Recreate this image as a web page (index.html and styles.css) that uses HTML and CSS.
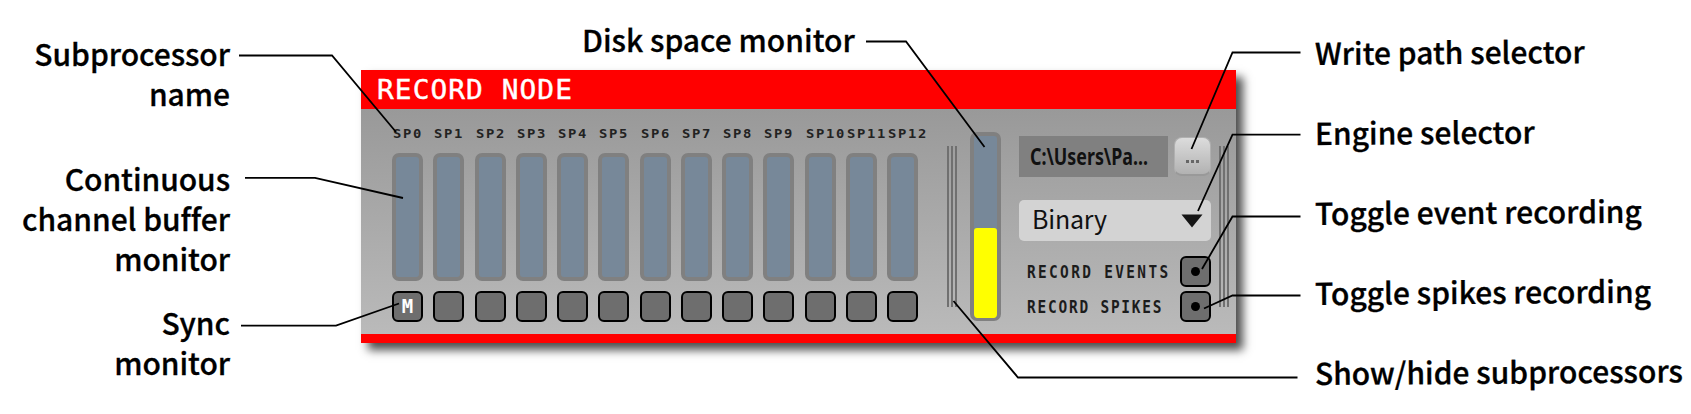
FILE: index.html
```
<!DOCTYPE html>
<html lang="en">
<head>
<meta charset="utf-8">
<title>Record Node</title>
<link rel="stylesheet" href="styles.css">
</head>
<body>
<main class="figure">
  <div class="notes notes-left">
    <p class="note note-name">Subprocessor<br>name</p>
    <p class="note note-buffer">Continuous<br>channel buffer<br>monitor</p>
    <p class="note note-sync">Sync<br>monitor</p>
  </div>
  <div class="center">
    <p class="note note-disk">Disk space monitor</p>
    <section class="node">
      <header class="node-title"><span>RECORD NODE</span></header>
      <div class="node-body">
        <div class="channels">
          <div class="channel"><span class="sp">SP0</span><div class="meter"></div><div class="key"><span class="key-label">M</span></div></div>
          <div class="channel"><span class="sp">SP1</span><div class="meter"></div><div class="key"></div></div>
          <div class="channel"><span class="sp">SP2</span><div class="meter"></div><div class="key"></div></div>
          <div class="channel"><span class="sp">SP3</span><div class="meter"></div><div class="key"></div></div>
          <div class="channel"><span class="sp">SP4</span><div class="meter"></div><div class="key"></div></div>
          <div class="channel"><span class="sp">SP5</span><div class="meter"></div><div class="key"></div></div>
          <div class="channel"><span class="sp">SP6</span><div class="meter"></div><div class="key"></div></div>
          <div class="channel"><span class="sp">SP7</span><div class="meter"></div><div class="key"></div></div>
          <div class="channel"><span class="sp">SP8</span><div class="meter"></div><div class="key"></div></div>
          <div class="channel"><span class="sp">SP9</span><div class="meter"></div><div class="key"></div></div>
          <div class="channel"><span class="sp">SP10</span><div class="meter"></div><div class="key"></div></div>
          <div class="channel"><span class="sp">SP11</span><div class="meter"></div><div class="key"></div></div>
          <div class="channel"><span class="sp">SP12</span><div class="meter"></div><div class="key"></div></div>
        </div>
        <div class="grip"><i></i><i></i><i></i></div>
        <div class="disk"><div class="disk-fill"></div></div>
        <div class="controls">
          <div class="path-row">
            <div class="path"><span>C:\Users\Pa...</span></div>
            <div class="browse"><i></i><i></i><i></i></div>
          </div>
          <div class="select"><span>Binary</span>
            <svg width="22" height="14" viewBox="0 0 22 14"><path d="M.5 .5H21.500L11 13.500Z" fill="#151515"/></svg>
          </div>
          <div class="toggle-row"><span>RECORD EVENTS</span><div class="key"><b class="dot"></b></div></div>
          <div class="toggle-row spikes"><span>RECORD SPIKES</span><div class="key"><b class="dot"></b></div></div>
        </div>
        <div class="grip grip-right"><i></i><i></i><i></i></div>
      </div>
    </section>
  </div>
  <div class="notes notes-right">
    <p class="note">Write path selector</p>
    <p class="note">Engine selector</p>
    <p class="note">Toggle event recording</p>
    <p class="note">Toggle spikes recording</p>
    <p class="note">Show/hide subprocessors</p>
  </div>
  <svg class="leaders" width="1691" height="414" viewBox="0 0 1691 414">
    <path d="M239 55.500H332L396 132"/>
    <path d="M245 177.800H315L403 198"/>
    <path d="M241 325.700H336L399 303.500"/>
    <path d="M866 41.500H906L984.500 147"/>
    <path d="M1300.500 52.500H1232.500L1191.500 149"/>
    <path d="M1300.500 134.700H1232.500L1198 211"/>
    <path d="M1300.500 216.500H1232.500L1202 269"/>
    <path d="M1300.500 295.500H1232.500L1204 308.500"/>
    <path d="M1297.500 377.500H1018L953.500 301"/>
  </svg>
</main>
</body>
</html>
```
FILE: styles.css
```
* { box-sizing: border-box; }
body { margin: 0; background: #fff; overflow: hidden; }
.figure {
  position: relative;
  display: grid;
  grid-template-columns: 230px 1085px 376px;
  width: 1691px;
  height: 414px;
}
.note {
  margin: 0;
  font: 500 30px/40px "Noto Sans CJK SC", "Noto Sans", sans-serif;
  color: #000;
  -webkit-text-stroke: .3px #000;
  white-space: nowrap;
}
.notes-left { text-align: right; padding-top: 33px; letter-spacing: -.05px; }
.note-buffer { margin-top: 45px; }
.note-sync { margin-top: 24px; }
.notes-right { display: grid; grid-auto-rows: 80.2px; padding-top: 31.5px; }
.notes-right .note { transform: rotate(-.4deg); transform-origin: left center; justify-self: start; }
.center { padding-left: 131px; }
.note-disk { padding: 19px 0 0 221px; height: 70px; }
.node { width: 875px; height: 273px; box-shadow: 7px 7px 9px rgba(0,0,0,.7); background: #f00; }
.node-title {
  height: 39px;
  padding: 0 0 0 16px;
  font: 26px/41px "DejaVu Sans Mono", monospace;
  color: #fff;
}
.node-title span {
  display: inline-block;
  letter-spacing: 1px;
  transform: scaleX(1.07);
  transform-origin: left;
  -webkit-text-stroke: .4px #fff;
}
.node-body {
  display: flex;
  height: 225px;
  padding-left: 31px;
  background: linear-gradient(#999, #bababa);
}
.node-body > * { flex: none; }
.channels { display: grid; grid-template-columns: repeat(13, 41.25px); padding-top: 18px; width: 555px; }
.channel { width: 31px; }
.sp {
  display: block;
  height: 26px;
  font: bold 12px/14px "DejaVu Sans Mono", monospace;
  letter-spacing: 1.5px;
  color: #222;
  transform: translateX(1px) scaleX(1.15);
  transform-origin: left;
}
.meter { height: 128px; border: 4px solid #808080; border-radius: 7px; background: #778899; }
.key {
  display: flex;
  justify-content: center;
  align-items: center;
  width: 31px;
  height: 31px;
  border: 2px solid #000;
  border-radius: 6px;
  background: #6e6e6e;
}
.key-label {
  height: 29px;
  font: bold 19px/28px "DejaVu Sans Mono", monospace;
  color: #fff;
}
.channel .key { margin-top: 10px; }
.grip { display: flex; gap: 2px; padding-top: 37px; width: 23px; }
.grip i { width: 2px; height: 161px; background: #707070; }
.disk {
  display: flex;
  align-items: flex-end;
  width: 31px;
  height: 189px;
  margin-top: 23px;
  border: 4px solid #808080;
  border-bottom-width: 3px;
  border-radius: 7px;
  background: #778899;
  overflow: hidden;
}
.disk-fill { width: 100%; height: 90px; background: #ff0; border-radius: 3px; }
.controls { width: 192px; margin-left: 18px; padding-top: 27px; }
.path-row { display: flex; justify-content: space-between; height: 41px; }
.path {
  width: 149px;
  padding-left: 11px;
  background: #808080;
  font: bold 23px/40px "Noto Sans", sans-serif;
  color: #111;
}
.path span { display: inline-block; transform: scaleX(.775); transform-origin: left; }
.browse {
  display: flex;
  justify-content: center;
  gap: 2px;
  width: 37px;
  height: 39px;
  margin-top: 1px;
  padding-top: 22px;
  border: 1px solid #b0b0b0;
  border-bottom: 2px solid #999;
  border-radius: 8px;
  background: linear-gradient(#dcdcdc, #b2b2b2);
}
.browse i { width: 3px; height: 3px; background: #666; }
.select {
  display: flex;
  justify-content: space-between;
  align-items: center;
  height: 41px;
  margin-top: 23px;
  padding: 0 8px 0 13px;
  border-radius: 5px;
  background: #d3d3d3;
  font: 25px/36px "Noto Sans CJK SC", "Noto Sans", sans-serif;
  color: #111;
}
.select span { height: 41px; letter-spacing: -.2px; }
.toggle-row {
  display: flex;
  justify-content: space-between;
  align-items: center;
  height: 31px;
  margin-top: 15px;
  padding-left: 8px;
  font: bold 17px/31px "DejaVu Sans Mono", monospace;
  color: #1c1c1c;
}
.toggle-row span {
  width: 150px;
  padding-top: 2px;
  letter-spacing: 2.75px;
  white-space: nowrap;
  transform: scaleX(.85);
  transform-origin: left;
}
.toggle-row .key { flex: none; }
.toggle-row.spikes { margin-top: 4px; }
.toggle-row.spikes span { letter-spacing: 2.1px; }
.dot { width: 9px; height: 9px; border-radius: 50%; background: #000; }
.grip-right { margin-left: 8px; width: 17px; }
.leaders { position: absolute; inset: 0; fill: none; stroke: #000; stroke-width: 1.8; }
```
